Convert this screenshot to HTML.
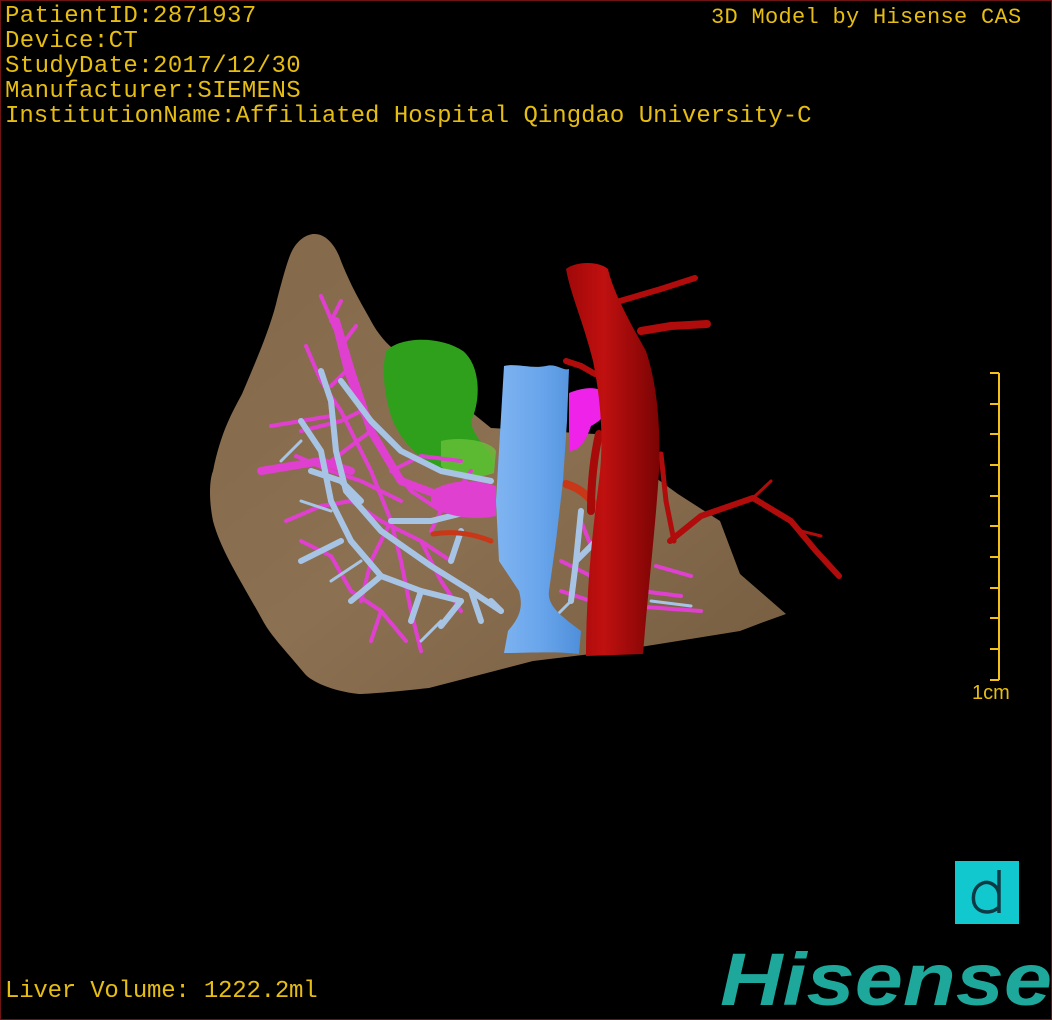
<!DOCTYPE html>
<html><head><meta charset="utf-8"><style>
html,body{margin:0;padding:0;background:#000;}
#w{position:relative;width:1050px;height:1018px;border:1px solid #6e1414;background:#000;overflow:hidden;}
.t{position:absolute;color:#e6bd12;font-family:"Liberation Mono",monospace;white-space:pre;line-height:25px;}
</style></head><body><div id="w">
<div class="t" style="left:4px;top:3px;font-size:24px;letter-spacing:0.4px;">PatientID:2871937
Device:CT
StudyDate:2017/12/30
Manufacturer:SIEMENS
<span style="letter-spacing:0">InstitutionName:Affiliated Hospital Qingdao University-C</span></div>
<div class="t" style="left:710px;top:4px;font-size:22px;letter-spacing:0.3px;">3D Model by Hisense CAS</div>
<div class="t" style="left:4px;top:978px;font-size:24px;letter-spacing:-0.2px;">Liver Volume: 1222.2ml</div>
<svg width="1050" height="1018" style="position:absolute;left:0;top:0">
<defs>
<linearGradient id="lv" x1="0" y1="0" x2="1" y2="1"><stop offset="0" stop-color="#84684a"/><stop offset="0.5" stop-color="#8c7052"/><stop offset="1" stop-color="#765d40"/></linearGradient>
<linearGradient id="ao" x1="0" y1="0" x2="1" y2="0"><stop offset="0" stop-color="#a00808"/><stop offset="0.4" stop-color="#c01010"/><stop offset="1" stop-color="#7a0404"/></linearGradient>
<linearGradient id="iv" x1="0" y1="0" x2="1" y2="0"><stop offset="0" stop-color="#7fb4f0"/><stop offset="0.5" stop-color="#6aa6ec"/><stop offset="1" stop-color="#4f8fda"/></linearGradient>
</defs>
<path fill="url(#lv)" d="M312,233 C325,232 335,245 340,260 C352,290 362,305 370,320 C378,335 388,345 395,350 L490,427 L594,433 L677,493 L719,520 L739,573 L785,613 L760,622 L739,630 L615,650 L532,660 L428,687 C400,690 370,693 358,693 C330,690 310,680 304,673 C285,650 270,635 262,620 C240,580 220,550 212,520 C208,500 208,480 212,470 C220,430 232,410 241,393 C255,360 268,330 275,303 C282,275 288,255 291,250 C296,240 304,234 312,233Z"/>
<path fill="#2fa01c" d="M385,350 C400,335 440,335 462,350 C480,365 480,400 470,420 C472,440 495,450 493,470 C480,478 455,478 440,470 C420,460 400,440 392,420 C384,400 380,370 385,350Z"/>
<path fill="#68c038" opacity="0.8" d="M440,440 C460,435 490,440 495,450 L493,472 C470,480 450,475 440,465Z"/>
<g fill="none" stroke-linecap="round" stroke-linejoin="round">
<g stroke="#e040d0" stroke-width="4">
<path d="M320,295 L335,330 L345,370 L360,410 L380,450 L410,490 L440,510 L470,500 L495,505"/>
<path d="M330,320 L340,300 M340,345 L355,325 M345,370 L330,385 M360,410 L340,420 L300,430 M370,430 L330,460"/>
<path d="M305,345 L320,380 L340,410 L370,470 L390,520 L400,560 L410,610 L420,650"/>
<path d="M270,425 L300,420 L330,415 M295,455 L330,470 L360,480 L400,500"/>
<path d="M285,520 L320,505 L350,500 L380,520 L420,540 L450,560"/>
<path d="M300,540 L330,555 L350,590 L380,610 L405,640"/>
<path d="M390,520 L370,560 L360,600 M420,540 L440,580 L460,610 M380,610 L370,640"/>
<path d="M450,500 L470,470 M440,510 L430,530 M390,470 L420,455 L460,460"/>
<path d="M580,520 L590,545 L600,560 M560,560 L600,580 L640,590 L680,595 M630,605 L700,610 M600,600 L620,620"/>
<path d="M655,565 L690,575 M560,590 L590,600"/>
</g>
<g stroke="#e040d0" stroke-width="8"><path d="M335,320 L350,370 L370,430 L400,480 L440,495 L480,490"/><path d="M260,470 L320,460 L350,470"/></g>
<g stroke="#a8c4e4" stroke-width="6">
<path d="M320,370 L330,400 L335,450 L345,490 L380,530 L430,565 L470,590 L500,610"/>
<path d="M300,420 L320,450 L330,500 L350,540 L380,575 L420,590 L460,600"/>
<path d="M340,380 L370,420 L400,450 L440,470 L490,480"/>
<path d="M310,470 L340,480 L360,500 M340,540 L300,560 M380,575 L350,600 M420,590 L410,620 M450,560 L460,530 M460,600 L440,625"/>
<path d="M390,520 L430,520 L470,510"/>
<path d="M470,590 L480,620 M500,610 L490,600"/>
<path d="M580,510 L575,560 L570,600 M575,560 L595,540"/>
</g>
<g stroke="#a8c4e4" stroke-width="3"><path d="M300,440 L280,460 M330,510 L300,500 M360,560 L330,580 M440,620 L420,640 M570,600 L550,620 M650,600 L690,605"/></g>
</g>
<path fill="#ee22e8" d="M568,392 C585,385 600,385 607,395 C610,410 600,420 590,425 C585,440 578,450 568,450 Z"/>
<path fill="#e040d0" d="M430,490 C450,478 475,478 495,485 L495,515 C470,520 445,515 430,505Z"/>
<g fill="none" stroke-linecap="round">
<path d="M565,483 C575,486 585,492 592,502" stroke="#c83818" stroke-width="8"/>
<path d="M432,533 C450,530 470,532 490,540" stroke="#c83818" stroke-width="5"/>
<path d="M598,433 C592,460 590,485 590,510" stroke="#a80a0a" stroke-width="8"/>
</g>
<path fill="url(#iv)" d="M503,365 C515,362 530,368 545,365 C555,362 562,370 568,368 L566,420 L562,480 L555,540 L548,590 C546,605 560,615 580,630 L578,653 C555,650 525,652 503,652 L507,630 C520,615 522,605 518,590 L498,560 L495,500 Z"/>
<g fill="none" stroke-linecap="round" stroke-linejoin="round" stroke="#b00c0c">
<path d="M619,300 L660,288 L694,277" stroke-width="6"/>
<path d="M640,330 L670,325 L706,323" stroke-width="8"/>
<path d="M565,360 L580,365 L594,373" stroke-width="6"/>
<path d="M660,453 L665,500 L673,540" stroke-width="5"/>
<path d="M669,540 L700,515 L752,497 L790,520 L815,550 L838,575" stroke-width="6"/>
<path d="M752,497 L770,480 M800,530 L820,535" stroke-width="3"/>
</g>
<path fill="url(#ao)" d="M565,268 C575,260 598,260 607,268 C612,290 628,320 645,350 C655,380 660,420 658,470 C655,520 648,580 642,653 L585,655 C585,600 590,540 598,480 C603,440 600,400 592,360 C582,320 570,295 565,268Z"/>
<g stroke="#f2c21a" stroke-width="2">
<line x1="998" y1="372" x2="998" y2="679"/>
<line x1="989" y1="372" x2="998" y2="372"/><line x1="989" y1="403" x2="998" y2="403"/><line x1="989" y1="433" x2="998" y2="433"/><line x1="989" y1="464" x2="998" y2="464"/><line x1="989" y1="495" x2="998" y2="495"/><line x1="989" y1="525" x2="998" y2="525"/><line x1="989" y1="556" x2="998" y2="556"/><line x1="989" y1="587" x2="998" y2="587"/><line x1="989" y1="617" x2="998" y2="617"/><line x1="989" y1="648" x2="998" y2="648"/><line x1="989" y1="679" x2="998" y2="679"/>
</g>
<text x="971" y="698" fill="#e6bd12" font-family="Liberation Sans,sans-serif" font-size="20">1cm</text>
<rect x="954" y="860" width="64" height="63" fill="#12c8cf"/>
<path d="M998,869 L998,912 M998,895 C998,884 988,880 982,882 C974,885 971,893 973,902 C976,912 990,914 998,906" fill="none" stroke="#0c3b45" stroke-width="3.5"/>
<text x="719" y="1004" fill="#1ea89c" font-family="Liberation Sans,sans-serif" font-weight="bold" font-style="italic" font-size="74" textLength="332" lengthAdjust="spacingAndGlyphs">Hisense</text>
</svg>
</div></body></html>
